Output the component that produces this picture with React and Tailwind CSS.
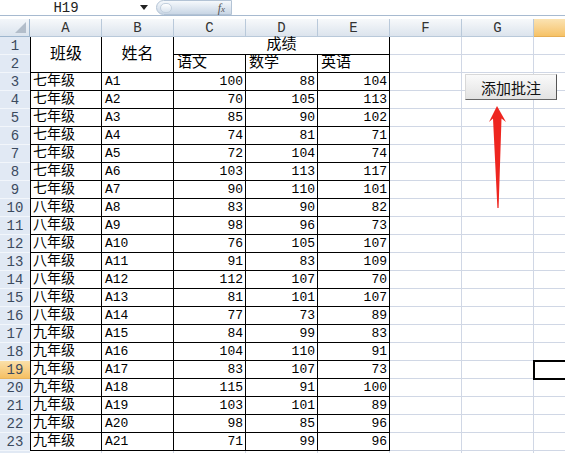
import React from "react";

const rows = [
  ["七年级", "A1", 100, 88, 104],
  ["七年级", "A2", 70, 105, 113],
  ["七年级", "A3", 85, 90, 102],
  ["七年级", "A4", 74, 81, 71],
  ["七年级", "A5", 72, 104, 74],
  ["七年级", "A6", 103, 113, 117],
  ["七年级", "A7", 90, 110, 101],
  ["八年级", "A8", 83, 90, 82],
  ["八年级", "A9", 98, 96, 73],
  ["八年级", "A10", 76, 105, 107],
  ["八年级", "A11", 91, 83, 109],
  ["八年级", "A12", 112, 107, 70],
  ["八年级", "A13", 81, 101, 107],
  ["八年级", "A14", 77, 73, 89],
  ["九年级", "A15", 84, 99, 83],
  ["九年级", "A16", 104, 110, 91],
  ["九年级", "A17", 83, 107, 73],
  ["九年级", "A18", 115, 91, 100],
  ["九年级", "A19", 103, 101, 89],
  ["九年级", "A20", 98, 85, 96],
  ["九年级", "A21", 71, 99, 96],
];

const RowHead = ({ n, active }) => (
  <div
    className={
      active
        ? "flex items-center justify-center bg-gradient-to-b from-[#fbe0a8] to-[#f5c063] border-b border-[#e9b45c] text-[14px] leading-none text-[#3b4a5e]"
        : "flex items-center justify-center bg-[#e1e9f4] border-b border-[#f2f6fb] text-[14px] leading-none text-[#3b4a5e]"
    }
  >
    {n}
  </div>
);

const EmptyCells = ({ selected }) => (
  <>
    <div className="border-r border-b border-[#d0d7e5]" />
    <div className="border-r border-b border-[#d0d7e5]" />
    <div className="relative border-b border-[#d0d7e5]">
      {selected && (
        <div className="absolute left-[-1px] top-[-1px] bottom-[-2px] right-[-4px] z-10 border-2 border-black" />
      )}
    </div>
  </>
);

export default function App() {
  return (
    <div className="relative w-[565px] h-[453px] overflow-hidden bg-white text-black font-['Liberation_Mono','Noto_Sans_CJK_SC',monospace]">
      {/* formula bar */}
      <div className="flex h-[16px] border-b border-[#a7bad0] bg-white">
        <div className="w-[132px] flex items-center justify-center text-[14px] leading-none text-[#222]">H19</div>
        <div className="w-[24px] flex items-center justify-center">
          <svg width="8" height="5" viewBox="0 0 8 5">
            <polygon points="0,0 8,0 4,5" fill="#222" />
          </svg>
        </div>
        <div className="relative flex items-center w-[76px] h-[15px] rounded-l-full rounded-r-[2px] border border-[#b3c3d5] bg-gradient-to-b from-[#f6f9fc] to-[#c9d6e5]">
          <div className="ml-[3px] w-[12px] h-[10px] rounded-full bg-gradient-to-b from-white to-[#d9e3ee] border border-[#c3d0de]" />
          <span className="ml-auto mr-[6px] italic font-['Liberation_Serif',serif] text-[12px] leading-none text-[#555]">
            f<span className="text-[9px]">x</span>
          </span>
        </div>
      </div>
      <div className="h-[3px] bg-white" />

      {/* sheet */}
      <div className="grid grid-cols-[30px_repeat(7,72px)_31px] auto-rows-[18px]">
        {/* column headers */}
        <div className="relative bg-gradient-to-b from-[#f3f6fa] to-[#dbe4ee] border-r border-b border-[#9eb6ce]">
          <svg className="absolute right-[3px] bottom-[3px]" width="11" height="11" viewBox="0 0 11 11">
            <polygon points="11,0 11,11 0,11" fill="#b2bdca" />
          </svg>
        </div>
        {["A", "B", "C", "D", "E", "F", "G"].map((c) => (
          <div
            key={c}
            className="flex items-center justify-center bg-gradient-to-b from-[#f7f9fb] to-[#dce4ed] border-r border-b border-[#b9c9da] text-[14px] leading-none text-[#333]"
          >
            {c}
          </div>
        ))}
        <div className="bg-gradient-to-b from-[#fbe3b2] to-[#f6c266] border-b border-[#e6ae55]" />

        {/* row 1 */}
        <RowHead n={1} />
        <div className="row-span-2 flex items-center justify-center border-l border-r border-b border-black text-[16px]">班级</div>
        <div className="row-span-2 flex items-center justify-center border-r border-b border-black text-[16px]">姓名</div>
        <div className="col-span-3 flex items-end justify-center border-r border-b border-black text-[15px] leading-[17px]">成绩</div>
        <EmptyCells />

        {/* row 2 */}
        <RowHead n={2} />
        {["语文", "数学", "英语"].map((t) => (
          <div key={t} className="flex items-end pl-[3px] border-r border-b border-black text-[15px] leading-[17px]">
            {t}
          </div>
        ))}
        <EmptyCells />

        {rows.map((r, i) => {
          const n = i + 3;
          return (
            <React.Fragment key={n}>
              <RowHead n={n} active={n === 19} />
              <div className="flex items-end pl-[2px] border-l border-r border-b border-black text-[14px] leading-[17px]">{r[0]}</div>
              <div className="flex items-end pl-[3px] border-r border-b border-black text-[13px] leading-[16px]">{r[1]}</div>
              {r.slice(2).map((v, j) => (
                <div key={j} className="flex items-end justify-end pr-[2px] border-r border-b border-black text-[13px] leading-[16px]">
                  {v}
                </div>
              ))}
              <EmptyCells selected={n === 19} />
            </React.Fragment>
          );
        })}

        {/* row 24, only its top edge is in view */}
        <div className="bg-[#e1e9f4] border-b border-[#f2f6fb]" />
        {[0, 1, 2, 3, 4].map((k) => (
          <div key={k} className="border-r border-b border-[#d0d7e5]" />
        ))}
        <EmptyCells />
      </div>

      {/* button placed on the sheet */}
      <button className="absolute left-[465px] top-[74px] w-[92px] h-[26px] flex items-center justify-center border border-t-[#d8d8d8] border-l-[#d8d8d8] border-r-[#555] border-b-[#666] bg-gradient-to-b from-[#fafafa] to-[#e2e2e2] text-[15px] leading-none text-[#111] font-['Noto_Sans_CJK_SC',sans-serif]">
        添加批注
      </button>

      {/* red arrow */}
      <svg className="absolute left-0 top-0 pointer-events-none" width="565" height="453" viewBox="0 0 565 453">
        <polygon
          points="497,106 506,122 501.5,118.5 498.6,208 497.4,208 493,118.5 489,122"
          fill="#ee2620"
        />
      </svg>
    </div>
  );
}
